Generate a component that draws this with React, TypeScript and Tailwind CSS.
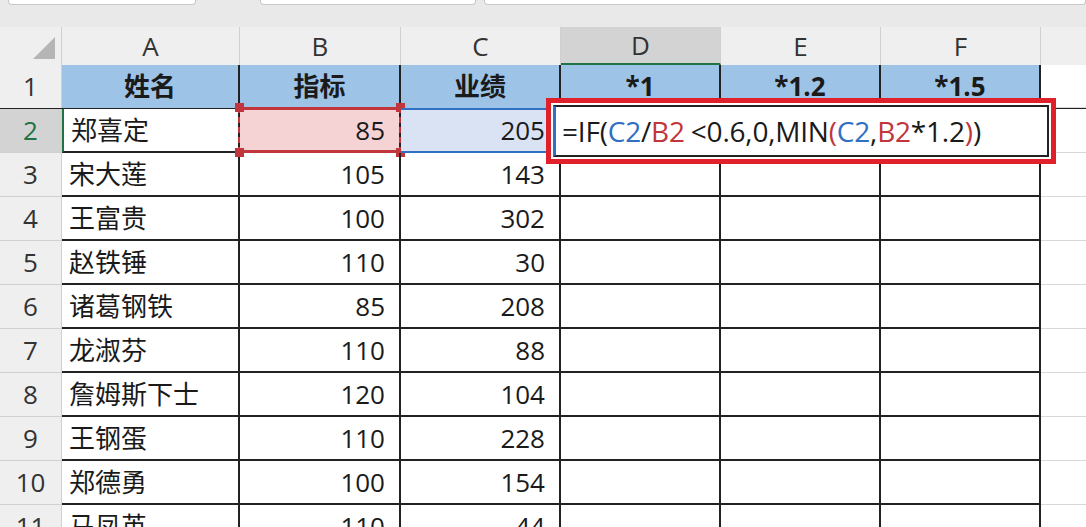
const rows: [string, string, string][] = [
  ["郑喜定", "85", "205"],
  ["宋大莲", "105", "143"],
  ["王富贵", "100", "302"],
  ["赵铁锤", "110", "30"],
  ["诸葛钢铁", "85", "208"],
  ["龙淑芬", "110", "88"],
  ["詹姆斯下士", "120", "104"],
  ["王钢蛋", "110", "228"],
  ["郑德勇", "100", "154"],
  ["马凤英", "110", "44"],
]

const cols = ["A", "B", "C", "D", "E", "F"]
const widths = ["w-[178px]", "w-[161px]", "w-[160px]", "w-[160px]", "w-[160px]", "w-[160px]"]

function Handle({ className }: { className: string }) {
  return <div className={`absolute h-[9px] w-[9px] bg-[#c0363c] ${className}`} />
}

export default function App() {
  return (
    <div
      className="relative h-[527px] w-[1086px] overflow-hidden bg-white text-[#1a1a1a]"
      style={{ fontFamily: '"Open Sans", "Noto Sans CJK SC", sans-serif' }}
    >
      {/* toolbar strip */}
      <div className="flex h-[27px] items-start gap-[64px] bg-[#e9e9e9] pl-[8px]">
        <div className="h-[5px] w-[188px] rounded-b border border-t-0 border-[#c8c8c8] bg-white" />
        <div className="h-[5px] w-[216px] rounded-b border border-t-0 border-[#c8c8c8] bg-white" />
        <div className="-ml-[56px] h-[5px] flex-1 rounded-b border border-t-0 border-[#c8c8c8] bg-white" />
      </div>

      {/* column headers */}
      <div className="flex h-[38px] bg-[#efefef] text-[26px] text-[#333]">
        <div className="relative w-[62px] border-r border-[#d0d0d0]">
          <div className="absolute bottom-[6px] right-[6px] h-0 w-0 border-b-[22px] border-l-[22px] border-b-[#b5b5b5] border-l-transparent" />
        </div>
        {cols.map((c, i) => (
          <div
            key={c}
            className={`${widths[i]} flex items-center justify-center border-r border-[#d0d0d0] ${
              c === "D" ? "border-b-2 border-b-[#217346] bg-[#d3d3d3]" : ""
            }`}
          >
            {c}
          </div>
        ))}
        <div className="flex-1" />
      </div>

      {/* header row */}
      <div className="flex h-[44px] border-b border-[#222]">
        <div className="flex w-[62px] items-center justify-center border-r border-[#d0d0d0] bg-[#efefef] text-[26px] text-[#333]">
          1
        </div>
        {["姓名", "指标", "业绩", "*1", "*1.2", "*1.5"].map((t, i) => (
          <div
            key={t}
            className={`${widths[i]} flex items-center justify-center border-r-2 border-[#222] bg-[#9dc3e6] text-[26px] font-bold`}
          >
            {t}
          </div>
        ))}
        <div className="flex-1 border-b border-[#d8d8d8]" />
      </div>

      {rows.map((r, idx) => {
        const n = idx + 2
        const sel = n === 2
        return (
          <div key={n} className="flex h-[44px] text-[26px]">
            <div
              className={`flex w-[62px] items-center justify-center border-r border-b border-[#d0d0d0] ${
                sel ? "bg-[#d3d3d3] text-[#217346]" : "bg-[#efefef] text-[#333]"
              }`}
            >
              {n}
            </div>
            <div
              className={`flex w-[178px] items-center border-r-2 border-b-2 border-[#222] pl-[7px] ${
                sel ? "border-l-2 border-l-[#217346]" : ""
              }`}
            >
              {r[0]}
            </div>
            <div
              className={`relative flex w-[161px] items-center justify-end border-r-2 border-b-2 border-[#222] pr-[14px] ${
                sel ? "bg-[#f5d3d5]" : ""
              }`}
            >
              {sel && (
                <>
                  <div className="absolute inset-[-2px] border-x-2 border-y-[3px] border-[#c0363c] [border-left-style:dashed] [border-right-style:dashed]" />
                  <Handle className="-left-[5px] -top-[6px]" />
                  <Handle className="-right-[6px] -top-[6px]" />
                  <Handle className="-left-[5px] -bottom-[6px]" />
                  <Handle className="-right-[6px] -bottom-[6px]" />
                </>
              )}
              <span className="relative">{r[1]}</span>
            </div>
            <div
              className={`relative flex w-[160px] items-center justify-end border-r-2 border-b-2 border-[#222] pr-[14px] ${
                sel ? "bg-[#dae3f3]" : ""
              }`}
            >
              {sel && <div className="absolute inset-x-0 -bottom-[2px] -top-[1px] border-y-2 border-[#2f6fc4]" />}
              <span className="relative">{r[2]}</span>
            </div>
            <div className="w-[160px] border-r-2 border-b-2 border-[#222]" />
            <div className="w-[160px] border-r-2 border-b-2 border-[#222]" />
            <div className="w-[160px] border-r-2 border-b-2 border-[#222]" />
            <div className="flex-1 border-b border-[#d8d8d8]" />
          </div>
        )
      })}

      {/* formula callout */}
      <div className="absolute left-[546px] top-[98px] h-[66px] w-[510px] border-[5px] border-[#e0202a] bg-white p-[2px]">
        <div className="flex h-full items-center border-2 border-[#222] border-l-[3px] border-l-[#2f6fc4] pl-[6px] text-[28px] tracking-[-0.2px]">
          <span>=IF(</span>
          <span className="text-[#2f6fc4]">C2</span>
          <span>/</span>
          <span className="text-[#c0363c]">B2</span>
          <span className="ml-[6px]">&lt;0.6,0,MIN</span>
          <span className="text-[#c0363c]">(</span>
          <span className="text-[#2f6fc4]">C2</span>
          <span>,</span>
          <span className="text-[#c0363c]">B2</span>
          <span>*1.2</span>
          <span className="text-[#c0363c]">)</span>
          <span>)</span>
        </div>
      </div>
    </div>
  )
}
